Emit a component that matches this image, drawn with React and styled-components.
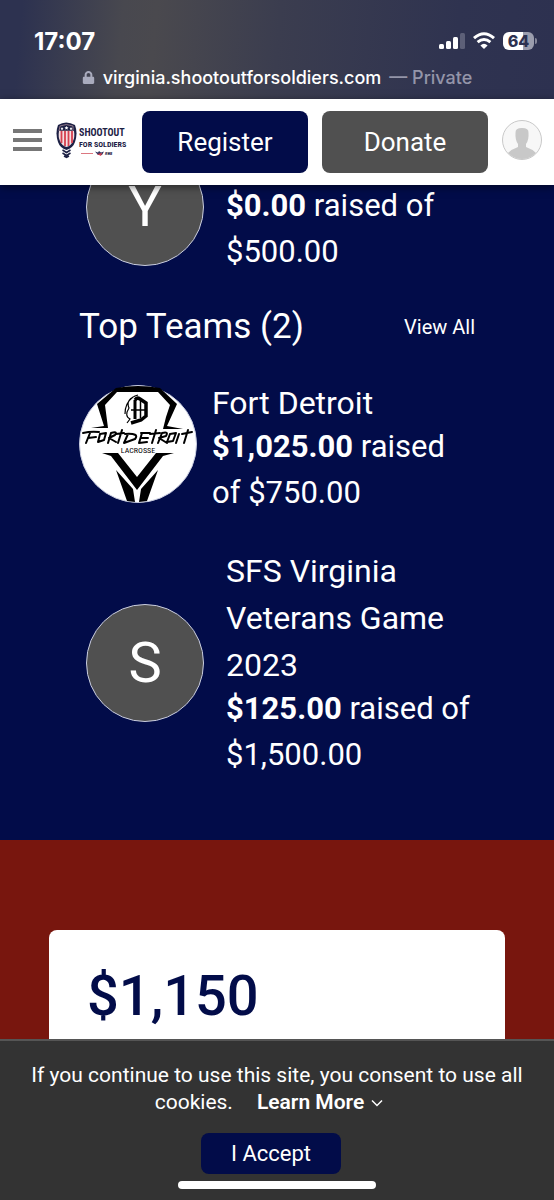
import styled, { createGlobalStyle } from "styled-components";
import { FaLock } from "react-icons/fa";

const teams = [
  { name: "Fort Detroit", raised: "$1,025.00", goal: "$750.00", logo: true },
  {
    name: "SFS Virginia Veterans Game 2023",
    raised: "$125.00",
    goal: "$1,500.00",
    initial: "S",
  },
];

function StatusIcons() {
  return (
    <StatusRight>
      <svg width="26" height="18" viewBox="0 0 26 18" fill="#fff">
        <rect x="0" y="12" width="5" height="5" rx="1.5" />
        <rect x="7" y="9" width="5" height="8" rx="1.5" />
        <rect x="14" y="5" width="5" height="12" rx="1.5" />
        <rect x="21" y="1" width="5" height="16" rx="1.5" fill="#5d6078" />
      </svg>
      <svg width="22" height="18" viewBox="0 0 22 18" fill="none" stroke="#fff" strokeWidth="3">
        <path d="M1 6.2Q11-2.6 21 6.2" />
        <path d="M4.6 10.2Q11 4.8 17.4 10.2" />
        <path d="M11 17 7.4 13.4Q11 10.2 14.6 13.4Z" fill="#fff" stroke="none" />
      </svg>
      <Battery>
        <BatteryLevel>64</BatteryLevel>
        <BatteryTip />
      </Battery>
    </StatusRight>
  );
}

function ShootoutLogo() {
  return (
    <svg width="72" height="38" viewBox="0 0 72 38" role="img" aria-label="Shootout for Soldiers">
      <path d="M2 4Q10-1 19 4Q22 12 19 21Q17 27 10.5 29Q4 27 2 21Q-1 12 2 4Z" fill="#1d2145" />
      <path d="M4 5Q10 2 17 5V10H3Z" fill="#1d2145" stroke="#a98b98" strokeWidth="0.8" />
      <path d="M3 10H18Q19 16 17 20Q15 25 10.5 26Q6 25 4 20Q2 16 3 10Z" fill="#f4dfe2" />
      <path d="M5.5 10V22M9 10V25M12.5 10V25M16 10V22" stroke="#d5404f" strokeWidth="1.8" />
      <path d="m6 6 .5 1h1l-.8.8.3 1.2-1-.6-1 .6.3-1.2-.8-.8h1ZM10.5 5l.7 1.2h1.3l-1 1 .3 1.4-1.3-.7-1.3.7.3-1.4-1-1h1.3ZM15 6l.5 1h1l-.8.8.3 1.2-1-.6-1 .6.3-1.2-.8-.8h1Z" fill="#fff" />
      <path d="m6.5 29 4 2.5 4-2.5M6.5 32l4 2.5 4-2.5M8 35l2.5 1.5L13 35" fill="none" stroke="#1d2145" strokeWidth="1.5" />
      <g fill="#1d2145" fontFamily="'Liberation Sans Narrow', 'Roboto Condensed', 'Liberation Sans', sans-serif" fontWeight="700">
        <text x="23" y="15" fontSize="10">SHOOTOUT</text>
        <text x="23" y="26" fontSize="8">FOR SOLDIERS</text>
        <text x="49" y="34" fontSize="4" fontStyle="italic">RWB</text>
      </g>
      <path d="M25 32.5H37" stroke="#dc7780" strokeWidth="1" />
      <path d="M39 30.5 42 31.5 43 30 45 31.5 48 30.5 46 34H42Z" fill="#303560" />
      <path d="m41 33 5-1-1 3Z" fill="#d5404f" />
    </svg>
  );
}

function FortDetroitLogo() {
  return (
    <svg width="118" height="118" viewBox="0 0 118 118" role="img" aria-label="Fort Detroit Lacrosse">
      <circle cx="59" cy="59" r="58.5" fill="#fff" stroke="#c9cde0" />
      <path d="M37 3Q59-1 81 3L98 19 88 41 104 44H84L87 32 91 20 79 7H38L26 20 29 43H12L25 41 18 19Z" fill="#000" />
      <path d="M23 68H39L58 92 77 68H95L84 71 58 105 32 71Z" fill="#000" />
      <path d="M37 85 54 104 56 117 48 116Z M79 85 62 104 60 117 68 116Z" fill="#000" />
      <g fill="none" stroke="#000">
        <path d="M56 15Q58 12 61 14L67 18V31L62 35 52 38" strokeWidth="3.5" />
        <path d="M56 15V34" strokeWidth="3" />
        <path d="M61.5 16V33M52 25H66" strokeWidth="1.5" />
        <path d="M59 10Q46 14 50 23Q45 31 51 34L48 38M54 12Q46 18 46 29" strokeWidth="1.2" />
      </g>
      <g fill="none" stroke="#000" strokeWidth="2" strokeLinecap="round" strokeLinejoin="round">
        <path d="M4 48Q12 46 20 47M11 48 7 58M9 53 17 52" />
        <path d="M21 49 27 48 25 55 19 57 21 49M29 58 32 48Q39 46 36 50L30 53 37 57" />
        <path d="M37 49 45 48M43 45 39 58" />
        <path d="M46 49Q61 48 56 54L45 58 49 49" />
        <path d="M62 48H71M62 53H69M63 48 60 58 68 57" />
        <path d="M71 49 81 48M77 45 73 58" />
        <path d="M79 58 83 48Q90 46 87 51L80 53 88 58M91 49 97 48 94 56 88 57 91 49" />
        <path d="M100 49 97 58M103 49 113 47M109 45 105 58" />
      </g>
      <text
        x="59"
        y="68"
        textAnchor="middle"
        fontFamily="'Liberation Sans Narrow', 'Roboto Condensed', 'Liberation Sans', sans-serif"
        fontSize="8"
      >
        LACROSSE
      </text>
    </svg>
  );
}

function Fundraiser({ name, raised, goal, initial, logo }) {
  return (
    <Row>
      {logo ? (
        <LogoSlot>
          <FortDetroitLogo />
        </LogoSlot>
      ) : (
        <InitialSlot>
          <Initial>{initial}</Initial>
        </InitialSlot>
      )}
      <RowText>
        {name && <Name>{name}</Name>}
        <Amount>
          <b>{raised}</b> raised of {goal}
        </Amount>
      </RowText>
    </Row>
  );
}

export default function App() {
  return (
    <Page>
      <GlobalStyle />
      <Browser>
        <StatusBar>
          <Clock>17:07</Clock>
          <StatusIcons />
        </StatusBar>
        <Address>
          <FaLock size={13} color="#a9abbd" />
          <Domain>virginia.shootoutforsoldiers.com</Domain>
          <span>— Private</span>
        </Address>
      </Browser>
      <Header>
        <MenuButton aria-label="Menu">
          <MenuLine />
          <MenuLine />
          <MenuLine />
        </MenuButton>
        <ShootoutLogo />
        <Actions>
          <HeaderButton $bg="#020c49">Register</HeaderButton>
          <HeaderButton $bg="#505050">Donate</HeaderButton>
        </Actions>
        <ProfileButton aria-label="Profile">
          <svg width="40" height="40" viewBox="0 0 40 40">
            <circle cx="20" cy="20" r="19.5" fill="#f7f7f7" stroke="#c8c8c8" />
            <path d="M13.5 13Q13 8 20 8T26.5 13Q27 20 24 24V27Q30 29 34 33Q28 39 20 39T6 33Q10 29 16 27V24Q13 20 13.5 13Z" fill="#c8c8c8" />
          </svg>
        </ProfileButton>
      </Header>
      <Leaders>
        <Peek>
          <Fundraiser initial="Y" raised="$0.00" goal="$500.00" />
        </Peek>
        <TitleRow>
          <Title>Top Teams (2)</Title>
          <ViewAll href="#teams">View All</ViewAll>
        </TitleRow>
        <TeamList>
          {teams.map((team) => (
            <Fundraiser key={team.name} {...team} />
          ))}
        </TeamList>
      </Leaders>
      <Totals>
        <TotalCard>$1,150</TotalCard>
      </Totals>
      <CookieBar>
        <CookieText>
          If you continue to use this site, you consent to use all cookies.
          <LearnMore href="#cookies">
            Learn More
            <svg width="12" height="8" viewBox="0 0 12 8" fill="none" stroke="#fff" strokeWidth="1.5">
              <path d="m1 1.5 5 5 5-5" />
            </svg>
          </LearnMore>
        </CookieText>
        <AcceptButton>I Accept</AcceptButton>
        <HomeIndicator />
      </CookieBar>
    </Page>
  );
}

const GlobalStyle = createGlobalStyle`
* {
box-sizing: border-box;
}
body {
margin: 0;
font-family: Roboto, sans-serif;
}
button {
border: 0;
padding: 0;
font-family: inherit;
cursor: pointer;
}
svg {
display: block;
flex-shrink: 0;
}
`;

const Page = styled.div`
display: flex;
flex-direction: column;
min-height: 100vh;
`;

const Browser = styled.div`
height: 99px;
padding-top: 26px;
color: #fff;
font-family: Inter, sans-serif;
background: linear-gradient(95deg, #2d3250 4%, #48484f 22%, #4a494e 28%, #3b3d4f 50%, #2f3350 82%, #2d3150 100%);
`;

const StatusBar = styled.div`
display: flex;
justify-content: space-between;
align-items: center;
height: 30px;
padding: 0 17px 0 34px;
`;

const Clock = styled.div`
font-size: 24px;
font-weight: 700;
`;

const StatusRight = styled.div`
display: flex;
align-items: center;
gap: 8px;
`;

const Battery = styled.div`
display: flex;
align-items: center;
gap: 1px;
`;

const BatteryLevel = styled.div`
width: 31px;
height: 18px;
border-radius: 6px;
background: linear-gradient(90deg, #fff 64%, #9b9dad 64%);
color: #2d3150;
font-size: 16px;
font-weight: 800;
line-height: 18px;
text-align: center;
`;

const BatteryTip = styled.div`
width: 2px;
height: 6px;
border-radius: 0 2px 2px 0;
background: #85879a;
`;

const Address = styled.div`
display: flex;
align-items: center;
justify-content: center;
gap: 8px;
height: 42px;
color: #9495a9;
font-size: 18px;
font-weight: 500;
`;

const Domain = styled.span`
color: #fff;
`;

const Header = styled.header`
position: relative;
z-index: 1;
display: flex;
align-items: center;
gap: 14px;
height: 86px;
padding: 0 12px 4px 13px;
background: #fff;
box-shadow: 0 2px 8px rgba(0, 0, 0, 0.5);
`;

const MenuButton = styled.button`
display: flex;
flex-direction: column;
gap: 5px;
background: none;
`;

const MenuLine = styled.span`
width: 29px;
height: 4px;
background: #777;
`;

const Actions = styled.div`
display: flex;
flex: 1;
gap: 14px;
padding-top: 4px;
`;

const HeaderButton = styled.button`
flex: 1;
height: 62px;
border-radius: 8px;
background: ${(props) => props.$bg};
color: #fff;
font-size: 26px;
`;

const ProfileButton = styled.button`
border-radius: 50%;
background: none;
`;

const Leaders = styled.section`
padding: 0 79px 62px;
background: #020c49;
color: #fff;
`;

const Peek = styled.div`
display: flex;
align-items: flex-end;
height: 90px;
overflow: hidden;
`;

const Row = styled.div`
display: flex;
align-items: center;
gap: 15px;
`;

const LogoSlot = styled.div`
padding-bottom: 8px;
`;

const InitialSlot = styled.div`
padding: 0 7px;
`;

const Initial = styled.div`
display: flex;
align-items: center;
justify-content: center;
width: 118px;
height: 118px;
border: 1px solid #c9cde0;
border-radius: 50%;
background: #505050;
font-size: 56px;
`;

const RowText = styled.div`
display: flex;
flex-direction: column;
justify-content: flex-end;
min-height: 136px;
`;

const Name = styled.div`
margin-bottom: -3px;
font-size: 32px;
line-height: 47px;
`;

const Amount = styled.div`
font-size: 31px;
line-height: 46px;
`;

const TitleRow = styled.div`
display: flex;
align-items: center;
justify-content: space-between;
margin: 29px 0 30px;
`;

const Title = styled.h2`
margin: 0;
font-size: 35px;
font-weight: 400;
line-height: 46px;
`;

const ViewAll = styled.a`
color: #fff;
font-size: 20px;
text-decoration: none;
`;

const TeamList = styled.div`
display: flex;
flex-direction: column;
gap: 32px;
`;

const Totals = styled.section`
display: flex;
flex: 1;
padding: 90px 49px 0;
background: #78160e;
`;

const TotalCard = styled.div`
flex: 1;
padding: 33px 38px 0;
border-radius: 8px 8px 0 0;
background: #fff;
color: #020c49;
font-size: 56px;
font-weight: 500;
line-height: 66px;
`;

const CookieBar = styled.div`
position: sticky;
bottom: 0;
display: flex;
flex-direction: column;
align-items: center;
padding: 21px 24px 11px;
border-top: 2px solid #555;
background: #333;
color: #fff;
`;

const CookieText = styled.div`
font-size: 21px;
line-height: 27px;
text-align: center;
`;

const LearnMore = styled.a`
display: inline-flex;
align-items: center;
gap: 7px;
margin: 0 16px 0 24px;
color: #fff;
font-weight: 600;
text-decoration: none;
`;

const AcceptButton = styled.button`
width: 140px;
height: 41px;
margin: 17px 12px 7px 0;
border-radius: 8px;
background: #020c49;
color: #fff;
font-size: 22px;
`;

const HomeIndicator = styled.div`
width: 198px;
height: 8px;
border-radius: 4px;
background: #fff;
`;
